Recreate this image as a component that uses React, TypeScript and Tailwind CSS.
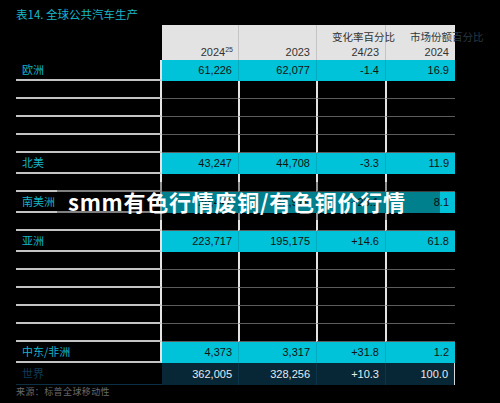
import React from 'react';

type Row =
  | { kind: 'empty' }
  | { kind: 'data'; label: string; values: [string, string, string, string] };

const rows: Row[] = [
  { kind: 'data', label: '欧洲', values: ['61,226', '62,077', '-1.4', '16.9'] },
  { kind: 'empty' },
  { kind: 'empty' },
  { kind: 'empty' },
  { kind: 'empty' },
  { kind: 'data', label: '北美', values: ['43,247', '44,708', '-3.3', '11.9'] },
  { kind: 'empty' },
  { kind: 'data', label: '南美洲', values: ['29,442', '22,979', '+28.1', '8.1'] },
  { kind: 'empty' },
  { kind: 'data', label: '亚洲', values: ['223,717', '195,175', '+14.6', '61.8'] },
  { kind: 'empty' },
  { kind: 'empty' },
  { kind: 'empty' },
  { kind: 'empty' },
  { kind: 'empty' },
  { kind: 'data', label: '中东/非洲', values: ['4,373', '3,317', '+31.8', '1.2'] },
];

const colWidths = ['w-[76px]', 'w-[78px]', 'w-[69px]', 'w-[70px]'];

const cjk = { fontFamily: '"Noto Sans CJK SC", "Noto Sans", sans-serif' };
const num = { fontFamily: '"Liberation Sans", Arial, sans-serif' };

const EmptyRow: React.FC = () => (
  <div className="flex h-[18px]">
    <div className="w-[146px] h-full border-b-2 border-r-2 border-b-[#c4c4c4] border-r-[#e4e4e4]" />
    {colWidths.map((w, i) => (
      <div
        key={i}
        className={`${w} h-full border-b border-b-[#5c5c5c] ${i > 0 ? 'border-l-2 border-l-[#e2e2e2]' : ''}`}
      />
    ))}
  </div>
);

const DataRow: React.FC<{ label: string; values: string[] }> = ({ label, values }) => (
  <div className="flex h-[21px]">
    <div
      className="w-[146px] h-full border-b-2 border-r-2 border-b-[#c4c4c4] border-r-[#e4e4e4] pl-[6px] flex items-center text-[11px] text-[#12b6ca]"
      style={cjk}
    >
      {label}
    </div>
    {values.map((v, i) => (
      <div
        key={i}
        className={`${colWidths[i]} h-full bg-[#00c3d9] flex items-center justify-end pr-[6px] text-[11px] text-[#111] ${i > 0 ? 'border-l border-l-[#00abbf]' : ''}`}
        style={num}
      >
        {v}
      </div>
    ))}
  </div>
);

export default function App() {
  return (
    <div className="relative w-[500px] h-[403px] bg-black overflow-hidden pl-[16px]">
      <div className="h-[25px] pt-[7px] text-[11.5px] leading-[15px] text-[#19b7cb]" style={cjk}>
        表14. 全球公共汽车生产
      </div>

      {/* header */}
      <div className="flex h-[35px]">
        <div className="w-[146px]" />
        <div className="w-[76px] bg-[#e3e3e3] flex flex-col justify-end items-end pr-[5px] pb-[0px] text-[11px] leading-[15px] text-[#333]" style={num}>
          <span>
            2024<sup className="text-[7px] relative -top-[4px]">25</sup>
          </span>
        </div>
        <div className="w-[78px] bg-[#e3e3e3] border-l border-l-[#c4c4c4] flex flex-col justify-end items-end pr-[6px] pb-[0px] text-[11px] leading-[15px] text-[#333]" style={num}>
          <span>2023</span>
        </div>
        <div className="w-[69px] bg-[#e3e3e3] border-l border-l-[#c4c4c4] flex flex-col justify-end pb-[0px] text-[#333]">
          <span className="relative z-10 pl-[15px] whitespace-nowrap text-[10.5px] leading-[16px]" style={cjk}>
            变化率百分比
          </span>
          <span className="self-end pr-[6px] text-[11px] leading-[15px]" style={num}>
            24/23
          </span>
        </div>
        <div className="w-[70px] bg-[#e3e3e3] border-l border-l-[#c4c4c4] flex flex-col justify-end pb-[0px] text-[#333]">
          <span className="relative z-10 pl-[24px] whitespace-nowrap text-[10.5px] leading-[16px] text-[#2a3a44]" style={cjk}>
            市场份额百分比
          </span>
          <span className="self-end pr-[6px] text-[11px] leading-[15px]" style={num}>
            2024
          </span>
        </div>
      </div>

      {/* body */}
      <div className="flex flex-col">
        {rows.map((r, i) =>
          r.kind === 'empty' ? <EmptyRow key={i} /> : <DataRow key={i} label={r.label} values={r.values} />
        )}
        <div className="flex h-[22px]">
          <div
            className="w-[146px] h-full border-b border-b-[#0b2f44] pl-[6px] flex items-center text-[11px] text-[#0f3a58]"
            style={cjk}
          >
            世界
          </div>
          {['362,005', '328,256', '+10.3', '100.0'].map((v, i) => (
            <div
              key={i}
              className={`${colWidths[i]} h-full bg-[#072737] flex items-center justify-end pr-[6px] text-[11px] text-[#e4ecf0] ${i > 0 ? 'border-l border-l-[#0d3447]' : ''} ${i === 3 ? 'border-r border-r-[#d8d8d8]' : ''}`}
              style={num}
            >
              {v}
            </div>
          ))}
        </div>
      </div>

      <div className="pt-[1px] text-[9px] tracking-[0.4px] leading-[12px] text-[#6a6a6a]" style={cjk}>
        来源：标普全球移动性
      </div>

      {/* watermark */}
      <div className="absolute left-[57px] top-[182px] w-[383px] h-[38px] bg-black/35 flex items-center pl-[11px]">
        <span className="text-[22px] tracking-[0.75px] font-bold text-white whitespace-nowrap leading-none" style={cjk}>
          smm有色行情废铜/有色铜价行情
        </span>
      </div>
    </div>
  );
}
